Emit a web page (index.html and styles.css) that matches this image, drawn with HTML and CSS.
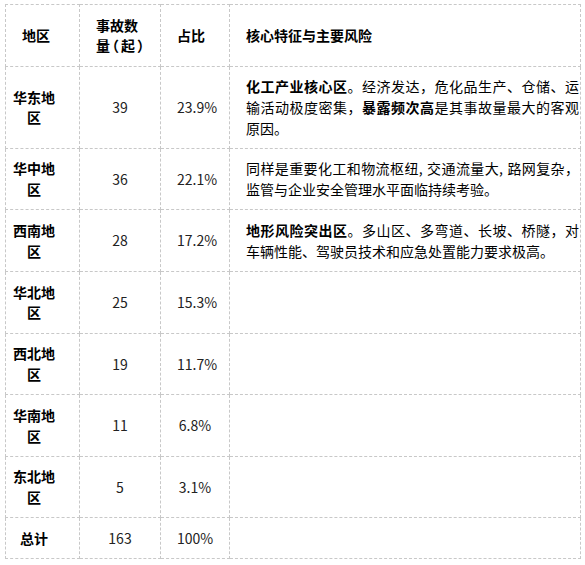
FILE: index.html
```html
<!DOCTYPE html>
<html lang="zh-CN">
<head>
<meta charset="utf-8">
<title>地区事故分布</title>
<link rel="stylesheet" href="styles.css">
</head>
<body>
<table class="stats">
  <colgroup>
    <col class="c-region">
    <col class="c-count">
    <col class="c-ratio">
    <col class="c-desc">
  </colgroup>
  <thead>
    <tr>
      <th>地区</th>
      <th>事故数<br><span class="nowrap">量<span class="paren">（</span>起<span class="paren">）</span></span></th>
      <th>占比</th>
      <th>核心特征与主要风险</th>
    </tr>
  </thead>
  <tbody>
    <tr>
      <td class="region">华东地区</td>
      <td class="num">39</td>
      <td class="num">23.9%</td>
      <td class="desc"><strong>化工产业核心区</strong>。经济发达，危化品生产、仓储、运输活动极度密集，<strong>暴露频次高</strong>是其事故量最大的客观原因。</td>
    </tr>
    <tr>
      <td class="region">华中地区</td>
      <td class="num">36</td>
      <td class="num">22.1%</td>
      <td class="desc">同样是重要化工和物流枢纽<span class="comma">,</span>交通流量大<span class="comma">,</span>路网复杂，监管与企业安全管理水平面临持续考验。</td>
    </tr>
    <tr>
      <td class="region">西南地区</td>
      <td class="num">28</td>
      <td class="num">17.2%</td>
      <td class="desc"><strong>地形风险突出区</strong>。多山区、多弯道、长坡、桥隧，对车辆性能、驾驶员技术和应急处置能力要求极高。</td>
    </tr>
    <tr>
      <td class="region">华北地区</td>
      <td class="num">25</td>
      <td class="num">15.3%</td>
      <td class="desc"></td>
    </tr>
    <tr>
      <td class="region">西北地区</td>
      <td class="num">19</td>
      <td class="num">11.7%</td>
      <td class="desc"></td>
    </tr>
    <tr>
      <td class="region">华南地区</td>
      <td class="num">11</td>
      <td class="num">6.8%</td>
      <td class="desc"></td>
    </tr>
    <tr>
      <td class="region">东北地区</td>
      <td class="num">5</td>
      <td class="num">3.1%</td>
      <td class="desc"></td>
    </tr>
    <tr>
      <td class="region">总计</td>
      <td class="num">163</td>
      <td class="num">100%</td>
      <td class="desc"></td>
    </tr>
  </tbody>
</table>
</body>
</html>
```
FILE: styles.css
```css
html, body {
  background: #fff;
}
body {
  margin: 4px 0 0 5px;
  font-family: "Noto Sans CJK SC", "Noto Sans", sans-serif;
  font-size: 14px;
  line-height: 20.7px;
  color: #000;
}
.stats {
  border-collapse: collapse;
  table-layout: fixed;
  width: 575px;
}
.c-region { width: 74px; }
.c-count { width: 81px; }
.c-ratio { width: 69px; }
.c-desc { width: 351px; }
.stats th,
.stats td {
  border: 1px dashed #c8c8c8;
  padding: 9.6px 16px;
  vertical-align: middle;
}
.stats th {
  text-align: left;
  font-weight: bold;
}
.nowrap {
  white-space: nowrap;
}
.paren {
  font-feature-settings: "halt";
  margin: 0 2px;
}
.stats td.region {
  font-weight: bold;
  text-align: center;
  padding-left: 7px;
  padding-right: 24px;
}
.stats td.num {
  text-align: center;
  color: #222;
}
.stats td.desc {
  text-align: justify;
  padding-right: 1px;
}
.comma {
  margin-right: 4px;
}
strong {
  font-weight: bold;
}
```
